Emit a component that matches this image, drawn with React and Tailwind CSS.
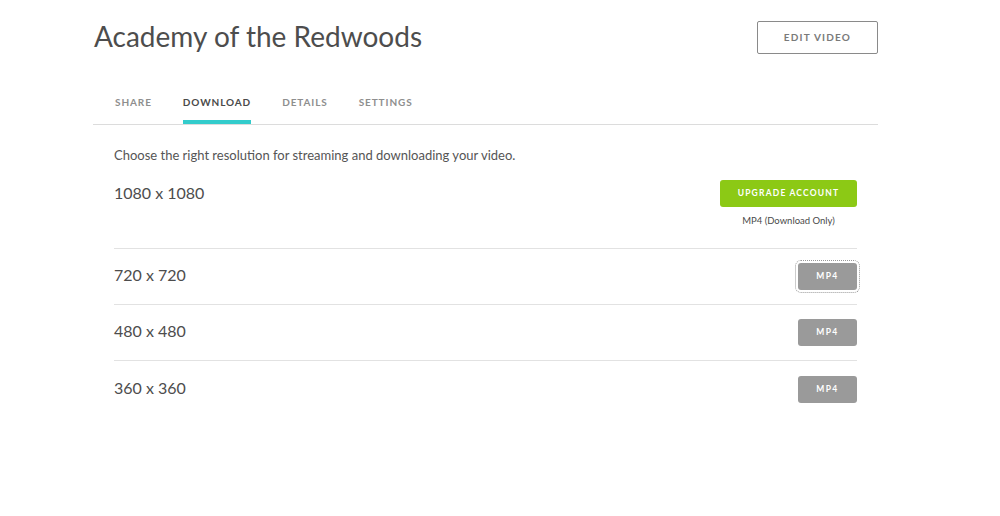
import React from "react";

const rows = [
  { id: 1, label: "720 x 720", focused: true },
  { id: 2, label: "480 x 480" },
  { id: 3, label: "360 x 360" },
];

const tabs = ["Share", "Download", "Details", "Settings"];

const App = () => {
  return (
    <div className="min-h-screen w-full bg-white font-['Lato',sans-serif] text-[#4a4a4a]">
      <div className="ml-[93px] w-[785px] pt-[21px]">
        <div className="flex items-start justify-between">
          <h1 className="pl-[1px] text-[28px] leading-[30px] text-[#4d4d4d]">
            Academy of the Redwoods
          </h1>
          <button className="h-[33px] w-[121px] rounded-[2px] border border-[#8a8a8a] text-[10px] font-bold tracking-[0.12em] text-[#7a7a7a]">
            EDIT VIDEO
          </button>
        </div>

        <div className="mt-[34px] flex gap-x-[31px] border-b border-[#dcdcdc] pl-[22px]">
          {tabs.map(tab => {
            const active = tab === "Download";
            return (
              <div
                key={`tab-${tab}`}
                className={`h-[36px] pt-[7px] text-[10px] font-bold uppercase tracking-[0.09em] ${
                  active
                    ? "border-b-[4px] border-[#33cccc] text-[#4a4a4a]"
                    : "text-[#8e8e8e]"
                }`}
              >
                {tab}
              </div>
            );
          })}
        </div>

        <div className="px-[21px] pt-[22px]">
          <p className="text-[13px] leading-[16px] text-[#555]">
            Choose the right resolution for streaming and downloading your video.
          </p>

          <div className="flex items-start justify-between border-b border-[#e2e2e2] pb-[20px] pt-[17px]">
            <span className="pt-[3px] text-[16px] leading-[20px] text-[#4d4d4d]">
              1080 x 1080
            </span>
            <div className="flex flex-col items-center">
              <button className="h-[27px] w-[137px] rounded-[3px] bg-[#8cc915] text-[8.5px] font-bold tracking-[0.14em] text-white">
                UPGRADE ACCOUNT
              </button>
              <span className="mt-[7px] text-[9.5px] leading-[14px] text-[#4a4a4a]">
                MP4 (Download Only)
              </span>
            </div>
          </div>

          {rows.map(({ id, label, focused }) => (
            <div
              key={`row-${id}`}
              className={`flex h-[56px] items-center justify-between ${
                id !== rows.length ? "border-b border-[#e2e2e2]" : ""
              }`}
            >
              <span className="pb-[3px] text-[16px] leading-[20px] text-[#4d4d4d]">
                {label}
              </span>
              <button
                className={`h-[27px] w-[59px] rounded-[3px] bg-[#9a9a9a] text-[8.5px] font-bold tracking-[0.16em] text-white ${
                  focused ? "outline-1 outline-dotted outline-offset-[2px] outline-[#999]" : ""
                }`}
              >
                MP4
              </button>
            </div>
          ))}
        </div>
      </div>
    </div>
  );
};

export default App;
